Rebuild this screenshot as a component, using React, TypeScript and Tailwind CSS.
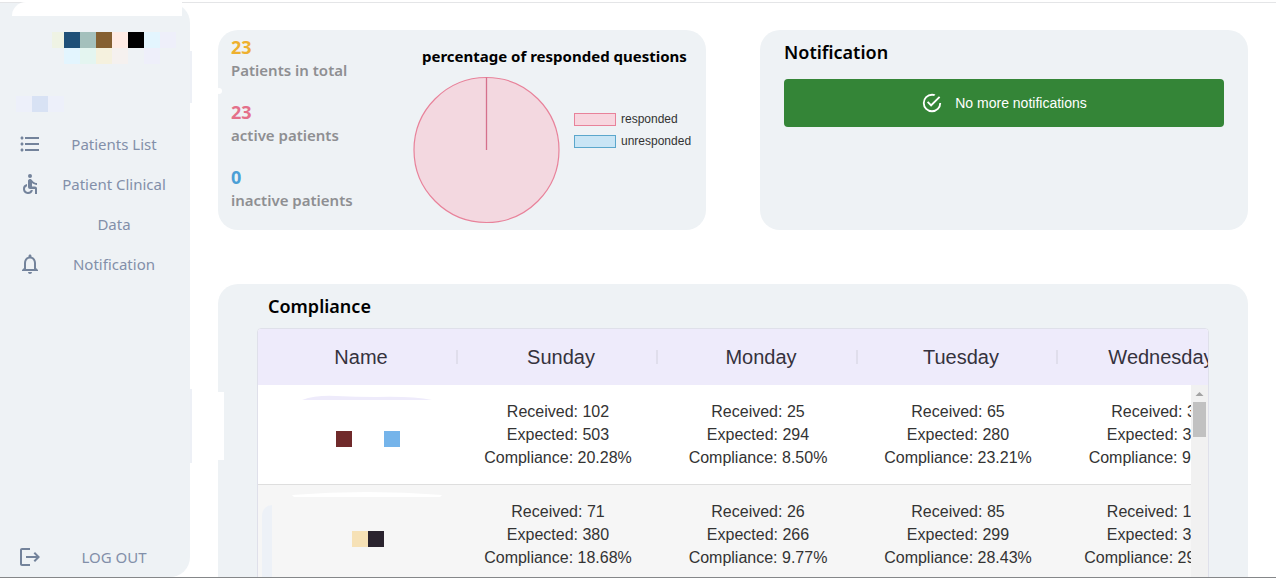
import type { ReactNode } from "react";
import { MdAccessible, MdFormatListBulleted, MdLogout, MdNotificationsNone } from "react-icons/md";

const days = ["Sunday", "Monday", "Tuesday", "Wednesday"];

type Entry = { received: string; expected: string; compliance: string };

const rows: { swatches: string[]; entries: Entry[] }[] = [
  {
    swatches: ["bg-[#702a2b]", "bg-transparent", "bg-transparent", "bg-[#75b4ea]"],
    entries: [
      { received: "102", expected: "503", compliance: "20.28%" },
      { received: "25", expected: "294", compliance: "8.50%" },
      { received: "65", expected: "280", compliance: "23.21%" },
      { received: "30", expected: "315", compliance: "9.52%" },
    ],
  },
  {
    swatches: ["bg-[#f6e1b6]", "bg-[#2a232e]"],
    entries: [
      { received: "71", expected: "380", compliance: "18.68%" },
      { received: "26", expected: "266", compliance: "9.77%" },
      { received: "85", expected: "299", compliance: "28.43%" },
      { received: "109", expected: "371", compliance: "29.38%" },
    ],
  },
];

const stats = [
  { value: "23", label: "Patients in total", color: "text-[#eeb02f]" },
  { value: "23", label: "active patients", color: "text-[#e4708a]" },
  { value: "0", label: "inactive patients", color: "text-[#4a9fd6]" },
];

const avatar = [
  ["bg-[#eff3e4]", "bg-[#1f5078]", "bg-[#a4c0bc]", "bg-[#856032]", "bg-[#ffece5]", "bg-black", "bg-[#e3f5fe]", "bg-[#eeeffa]"],
  ["bg-transparent", "bg-[#e3f5fe]", "bg-[#e4f5f0]", "bg-[#f5f1de]", "bg-[#f5f1ef]", "bg-transparent", "bg-[#eeeffa]", "bg-transparent"],
];

function NavItem({ icon, children }: { icon: ReactNode; children: ReactNode }) {
  return (
    <a href="#" className="flex items-start pl-[18px] pr-1 text-[#828fa9]">
      <span className="flex h-10 w-6 shrink-0 items-center text-2xl text-[#73839b]">{icon}</span>
      <span className="flex-1 px-4 text-center text-[15px] leading-10">{children}</span>
    </a>
  );
}

function Sidebar() {
  return (
    <aside className="relative flex w-[190px] shrink-0 flex-col rounded-r-[20px] bg-[#eef2f5] pt-[29px]">
      <div className="absolute -top-px left-3 h-3.5 w-[170px] rounded-tl-[20px] bg-white" />
      <div className="absolute left-full top-[48px] h-[52px] w-0.5 bg-[#edf0f6]" />
      <div className="absolute left-full top-[386px] h-[74px] w-0.5 bg-[#edf0f6]" />
      <div className="flex flex-col pl-[52px]">
        {avatar.map((line, i) => (
          <div key={i} className="flex">
            {line.map((c, j) => (
              <span key={j} className={`h-4 w-4 first:w-3 ${c}`} />
            ))}
          </div>
        ))}
      </div>
      <div className="mt-8 flex pl-4">
        <span className="size-4 bg-[#edf0fa]" />
        <span className="size-4 bg-[#d8e2f4]" />
        <span className="size-4 bg-[#edf0fa]" />
      </div>
      <nav className="mt-3 flex flex-1 flex-col">
        <NavItem icon={<MdFormatListBulleted />}>Patients List</NavItem>
        <NavItem icon={<MdAccessible />}>Patient Clinical Data</NavItem>
        <NavItem icon={<MdNotificationsNone />}>Notification</NavItem>
      </nav>
      <NavItem icon={<MdLogout />}>LOG OUT</NavItem>
    </aside>
  );
}

function Summary() {
  return (
    <section className="relative flex h-[200px] rounded-[20px] bg-[#eef2f5] pl-[13px]">
      <div className="absolute -left-0.5 top-[58px] size-1.5 rounded-full bg-white" />
      <dl className="flex w-[183px] shrink-0 flex-col gap-[19px] pt-1.5">
        {stats.map((s) => (
          <div key={s.label} className="flex flex-col-reverse">
            <dt className="text-[15px] font-semibold leading-[23px] text-[#8e8f92]">{s.label}</dt>
            <dd className={`text-lg font-bold leading-[23px] ${s.color}`}>{s.value}</dd>
          </div>
        ))}
      </dl>
      <div className="flex-1">
        <h2 className="whitespace-nowrap pl-2 pt-[14px] text-[15px] font-bold leading-6 text-black">
          percentage of responded questions
        </h2>
        <div className="mt-2 flex">
          <svg viewBox="0 0 148 148" className="-ml-0.5 size-[148px] shrink-0" role="img" aria-label="Responded questions">
            <circle cx="74.5" cy="74" r="72.5" fill="#f3d8e0" stroke="#e8829a" strokeWidth="1.2" />
            <path d="M74.5 74V1.5" stroke="#d5708c" strokeWidth="1.3" />
          </svg>
          <ul className="ml-3.5 flex flex-col pt-8 font-['Liberation_Sans',sans-serif] text-xs text-[#333]">
            <li className="flex h-[22px] items-center gap-[5px]">
              <span className="h-[13px] w-[42px] border border-[#e8829a] bg-[#f7d6df]" />
              responded
            </li>
            <li className="flex h-[22px] items-center gap-[5px]">
              <span className="h-[13px] w-[42px] border border-[#5ba7cc] bg-[#c9e5f5]" />
              unresponded
            </li>
          </ul>
        </div>
      </div>
    </section>
  );
}

function Notifications() {
  return (
    <section className="h-[200px] rounded-[20px] bg-[#eef2f5] px-6 pt-2">
      <h2 className="text-lg font-semibold leading-7 text-black">Notification</h2>
      <div
        role="status"
        className="mt-[13px] flex h-12 items-center justify-center gap-3 rounded bg-[#348537] font-['Liberation_Sans',sans-serif] text-sm font-medium text-white"
      >
        <svg viewBox="0 0 24 24" className="size-[22px]" fill="currentColor" aria-hidden="true">
          <path d="M20,12A8,8 0 0,1 12,20A8,8 0 0,1 4,12A8,8 0 0,1 12,4C12.76,4 13.5,4.11 14.2,4.31L15.77,2.74C14.61,2.26 13.34,2 12,2A10,10 0 0,0 2,12A10,10 0 0,0 12,22A10,10 0 0,0 22,12M7.91,10.08L6.5,11.5L11,16L21,6L19.59,4.58L11,13.17L7.91,10.08Z" />
        </svg>
        No more notifications
      </div>
    </section>
  );
}

function Compliance() {
  return (
    <section className="relative mt-[54px] rounded-t-[20px] bg-[#eef2f5] px-[39px] pt-2">
      <div className="absolute left-0 top-[108px] h-[68px] w-1.5 bg-white" />
      <h2 className="pl-[11px] text-lg font-semibold leading-7 text-black">Compliance</h2>
      <div className="relative mt-2 overflow-hidden rounded-t border border-[#dfe0ea] bg-white font-['Liberation_Sans',sans-serif]">
        <table className="w-[1000px] table-fixed border-separate border-spacing-0 text-center">
          <thead>
            <tr className="h-14 bg-[#eeebfb]">
              {["Name", ...days].map((d) => (
                <th key={d} scope="col" className="p-0 text-xl font-normal text-[#35323d]">
                  <div className="flex items-center">
                    <span className="flex-1 pl-2">{d}</span>
                    <span className="h-3.5 w-0.5 bg-[#e0deec]" />
                  </div>
                </th>
              ))}
            </tr>
          </thead>
          <tbody>
            {rows.map((r, i) => (
              <tr key={i} className="h-[100px] bg-white even:bg-[#f6f6f6]">
                <td className="relative border-b border-[#dedede] p-0">
                  {i === 0 ? (
                    <svg viewBox="0 0 130 6" className="absolute left-11 top-2.5 h-1.5 w-[130px]" aria-hidden="true">
                      <path d="M0 5Q14 0 34 1T74 2Q110 1 130 5Z" fill="#eeebfb" />
                    </svg>
                  ) : (
                    <>
                      <svg viewBox="0 0 150 6" className="absolute left-[34px] top-1.5 h-1.5 w-[150px]" aria-hidden="true">
                        <path d="M0 4Q75 -2 150 4L148 6H2Z" fill="#fff" />
                      </svg>
                      <span className="absolute bottom-0 left-1 top-5 w-2.5 rounded-tl-xl bg-[#edf1f7]" />
                    </>
                  )}
                  <div className="flex justify-center pl-5 pt-2">
                    {r.swatches.map((c, j) => (
                      <span key={j} className={`size-4 ${c}`} />
                    ))}
                  </div>
                </td>
                {r.entries.map((e, j) => (
                  <td key={j} className="border-b border-[#dedede] p-0 text-base leading-[23px] text-[#333]">
                    <div>Received: {e.received}</div>
                    <div>Expected: {e.expected}</div>
                    <div>Compliance: {e.compliance}</div>
                  </td>
                ))}
              </tr>
            ))}
          </tbody>
        </table>
        <div className="absolute bottom-0 right-0 top-14 flex w-[17px] flex-col items-center bg-[#f1f1f1]" aria-hidden="true">
          <svg viewBox="0 0 17 17" className="size-[17px]">
            <path d="M4.5 11L8.5 7L12.5 11Z" fill="#a3a3a3" />
          </svg>
          <span className="h-[35px] w-[13px] bg-[#c1c1c1]" />
        </div>
      </div>
    </section>
  );
}

export default function App() {
  return (
    <div className="flex h-screen flex-col overflow-hidden border-b border-[#858789] bg-white pt-0.5 font-['Noto_Sans','Open_Sans',sans-serif]">
      <div className="flex min-h-0 flex-1 border-t border-[#e4e5e7]">
        <Sidebar />
        <main className="min-w-0 flex-1 px-7 pt-[27px]">
          <div className="grid grid-cols-2 gap-[54px]">
            <Summary />
            <Notifications />
          </div>
          <Compliance />
        </main>
      </div>
    </div>
  );
}
